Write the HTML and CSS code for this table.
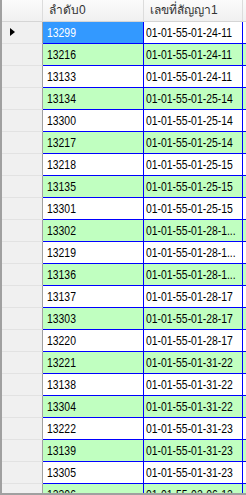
FILE: index.html
```html
<!DOCTYPE html>
<html>
<head>
<meta charset="utf-8">
<link rel="stylesheet" href="styles.css">
</head>
<body>
<div class="grid">
  <div class="row head">
    <div class="rh"></div>
    <div class="cell c1">ลำดับ0</div>
    <div class="cell c2">เลขที่สัญญา1</div>
    <div class="cell c3"></div>
  </div>
  <div class="row cur">
    <div class="rh"><span class="arrow"></span></div>
    <div class="cell c1 sel"><span class="t">13299</span></div>
    <div class="cell c2"><span class="t">01-01-55-01-24-11</span></div>
    <div class="cell c3"></div>
  </div>
  <div class="row alt"><div class="rh"></div><div class="cell c1"><span class="t">13216</span></div><div class="cell c2"><span class="t">01-01-55-01-24-11</span></div><div class="cell c3"></div></div>
  <div class="row"><div class="rh"></div><div class="cell c1"><span class="t">13133</span></div><div class="cell c2"><span class="t">01-01-55-01-24-11</span></div><div class="cell c3"></div></div>
  <div class="row alt"><div class="rh"></div><div class="cell c1"><span class="t">13134</span></div><div class="cell c2"><span class="t">01-01-55-01-25-14</span></div><div class="cell c3"></div></div>
  <div class="row"><div class="rh"></div><div class="cell c1"><span class="t">13300</span></div><div class="cell c2"><span class="t">01-01-55-01-25-14</span></div><div class="cell c3"></div></div>
  <div class="row alt"><div class="rh"></div><div class="cell c1"><span class="t">13217</span></div><div class="cell c2"><span class="t">01-01-55-01-25-14</span></div><div class="cell c3"></div></div>
  <div class="row"><div class="rh"></div><div class="cell c1"><span class="t">13218</span></div><div class="cell c2"><span class="t">01-01-55-01-25-15</span></div><div class="cell c3"></div></div>
  <div class="row alt"><div class="rh"></div><div class="cell c1"><span class="t">13135</span></div><div class="cell c2"><span class="t">01-01-55-01-25-15</span></div><div class="cell c3"></div></div>
  <div class="row"><div class="rh"></div><div class="cell c1"><span class="t">13301</span></div><div class="cell c2"><span class="t">01-01-55-01-25-15</span></div><div class="cell c3"></div></div>
  <div class="row alt"><div class="rh"></div><div class="cell c1"><span class="t">13302</span></div><div class="cell c2"><span class="t">01-01-55-01-28-1...</span></div><div class="cell c3"></div></div>
  <div class="row"><div class="rh"></div><div class="cell c1"><span class="t">13219</span></div><div class="cell c2"><span class="t">01-01-55-01-28-1...</span></div><div class="cell c3"></div></div>
  <div class="row alt"><div class="rh"></div><div class="cell c1"><span class="t">13136</span></div><div class="cell c2"><span class="t">01-01-55-01-28-1...</span></div><div class="cell c3"></div></div>
  <div class="row"><div class="rh"></div><div class="cell c1"><span class="t">13137</span></div><div class="cell c2"><span class="t">01-01-55-01-28-17</span></div><div class="cell c3"></div></div>
  <div class="row alt"><div class="rh"></div><div class="cell c1"><span class="t">13303</span></div><div class="cell c2"><span class="t">01-01-55-01-28-17</span></div><div class="cell c3"></div></div>
  <div class="row"><div class="rh"></div><div class="cell c1"><span class="t">13220</span></div><div class="cell c2"><span class="t">01-01-55-01-28-17</span></div><div class="cell c3"></div></div>
  <div class="row alt"><div class="rh"></div><div class="cell c1"><span class="t">13221</span></div><div class="cell c2"><span class="t">01-01-55-01-31-22</span></div><div class="cell c3"></div></div>
  <div class="row"><div class="rh"></div><div class="cell c1"><span class="t">13138</span></div><div class="cell c2"><span class="t">01-01-55-01-31-22</span></div><div class="cell c3"></div></div>
  <div class="row alt"><div class="rh"></div><div class="cell c1"><span class="t">13304</span></div><div class="cell c2"><span class="t">01-01-55-01-31-22</span></div><div class="cell c3"></div></div>
  <div class="row"><div class="rh"></div><div class="cell c1"><span class="t">13222</span></div><div class="cell c2"><span class="t">01-01-55-01-31-23</span></div><div class="cell c3"></div></div>
  <div class="row alt"><div class="rh"></div><div class="cell c1"><span class="t">13139</span></div><div class="cell c2"><span class="t">01-01-55-01-31-23</span></div><div class="cell c3"></div></div>
  <div class="row"><div class="rh"></div><div class="cell c1"><span class="t">13305</span></div><div class="cell c2"><span class="t">01-01-55-01-31-23</span></div><div class="cell c3"></div></div>
  <div class="row alt"><div class="rh"></div><div class="cell c1"><span class="t">13306</span></div><div class="cell c2"><span class="t">01-01-55-02-06-13</span></div><div class="cell c3"></div></div>
</div>
</body>
</html>
```
FILE: styles.css
```css
html, body {
  margin: 0;
  padding: 0;
  background: #ffffff;
  overflow: hidden;
}
.grid {
  width: 246px;
  height: 495px;
  box-sizing: border-box;
  border-left: 2px solid #a0a0a0;
  border-bottom: 2px solid #a0a0a0;
  overflow: hidden;
  font-family: "Liberation Sans", "Noto Sans", sans-serif;
  font-size: 13px;
  color: #000;
}
.row {
  display: flex;
  height: 22px;
  box-sizing: border-box;
  flex: none;
}
.rh {
  width: 41px;
  flex: none;
  box-sizing: border-box;
  border-right: 1px solid #a0a0a0;
  border-bottom: 1px solid #e2e2e2;
  background: #f0f0f0;
  position: relative;
}
.cell {
  box-sizing: border-box;
  height: 22px;
  line-height: 21px;
  border-right: 1px solid #0000ff;
  border-bottom: 1px solid #0000ff;
  white-space: nowrap;
  overflow: hidden;
  padding-left: 4px;
}
.t {
  display: inline-block;
  transform: scaleX(0.8);
  transform-origin: 0 50%;
}
.c1 { width: 101px; flex: none; }
.c2 { width: 99px; flex: none; padding-left: 2px; }
.c2 .t { margin-right: -22px; }
.c1 .t { margin-right: -7px; }
.c3 { flex: 1; }
.alt .cell { background: #c0ffc0; }
.sel { background: #3399ff; color: #ffffff; }
.head .rh,
.head .cell {
  background: linear-gradient(#fbfbfb, #f0f0f0);
  border-bottom: 1px solid #d5d5d5;
  border-right: 1px solid #dcdcdc;
  color: #333;
  font-size: 12px;
}
.head .c1 { padding-left: 6px; }
.head .c2 { padding-left: 6px; }
.arrow {
  position: absolute;
  left: 8px;
  top: 6px;
  width: 0;
  height: 0;
  border-top: 4.5px solid transparent;
  border-bottom: 4.5px solid transparent;
  border-left: 5px solid #000;
}
```
